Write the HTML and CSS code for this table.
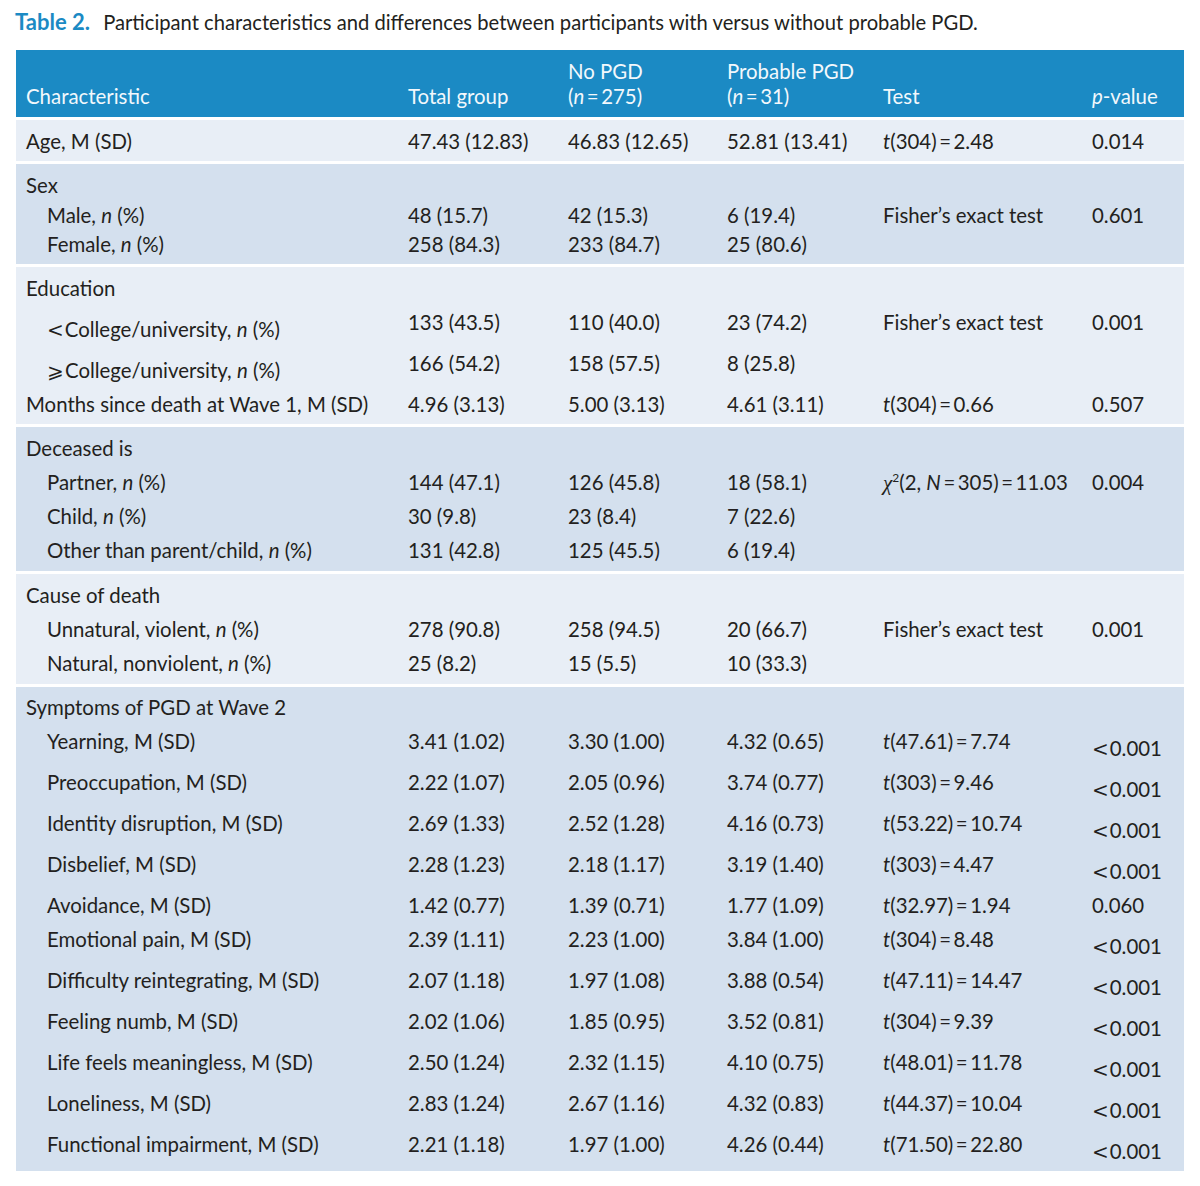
FILE: index.html
```html
<!DOCTYPE html>
<html lang="en">
<head>
<meta charset="utf-8">
<title>Table 2</title>
<link rel="stylesheet" href="styles.css">
</head>
<body>
<div class="page">
  <p class="caption"><span class="label">Table 2.</span> Participant characteristics and differences between participants with versus without probable PGD.</p>

  <div class="table">
    <div class="head row">
      <div>Characteristic</div>
      <div>Total group</div>
      <div>No PGD<br>(<i>n</i>&#8201;=&#8201;275)</div>
      <div>Probable PGD<br>(<i>n</i>&#8201;=&#8201;31)</div>
      <div>Test</div>
      <div><i>p</i>-value</div>
    </div>

    <div class="band light">
      <div class="row">
        <div>Age, M (SD)</div><div>47.43 (12.83)</div><div>46.83 (12.65)</div><div>52.81 (13.41)</div><div><i>t</i>(304)&#8201;=&#8201;2.48</div><div>0.014</div>
      </div>
    </div>

    <div class="band dark">
      <div class="row tight-head"><div>Sex</div></div>
      <div class="row tight">
        <div class="sub">Male, <i>n</i> (%)</div><div>48 (15.7)</div><div>42 (15.3)</div><div>6 (19.4)</div><div>Fisher’s exact test</div><div>0.601</div>
      </div>
      <div class="row">
        <div class="sub">Female, <i>n</i> (%)</div><div>258 (84.3)</div><div>233 (84.7)</div><div>25 (80.6)</div><div></div><div></div>
      </div>
    </div>

    <div class="band light">
      <div class="row"><div>Education</div></div>
      <div class="row">
        <div class="sub low"><span class="op">&lt;</span>College/university, <i>n</i> (%)</div><div>133 (43.5)</div><div>110 (40.0)</div><div>23 (74.2)</div><div>Fisher’s exact test</div><div>0.001</div>
      </div>
      <div class="row">
        <div class="sub low"><span class="op">⩾</span>College/university, <i>n</i> (%)</div><div>166 (54.2)</div><div>158 (57.5)</div><div>8 (25.8)</div><div></div><div></div>
      </div>
      <div class="row">
        <div>Months since death at Wave 1, M (SD)</div><div>4.96 (3.13)</div><div>5.00 (3.13)</div><div>4.61 (3.11)</div><div><i>t</i>(304)&#8201;=&#8201;0.66</div><div>0.507</div>
      </div>
    </div>

    <div class="band dark deceased">
      <div class="row"><div>Deceased is</div></div>
      <div class="row">
        <div class="sub">Partner, <i>n</i> (%)</div><div>144 (47.1)</div><div>126 (45.8)</div><div>18 (58.1)</div><div><span class="chi">χ</span><sup>2</sup>(2, <i>N</i>&#8201;=&#8201;305)&#8201;=&#8201;11.03</div><div>0.004</div>
      </div>
      <div class="row">
        <div class="sub">Child, <i>n</i> (%)</div><div>30 (9.8)</div><div>23 (8.4)</div><div>7 (22.6)</div><div></div><div></div>
      </div>
      <div class="row">
        <div class="sub">Other than parent/child, <i>n</i> (%)</div><div>131 (42.8)</div><div>125 (45.5)</div><div>6 (19.4)</div><div></div><div></div>
      </div>
    </div>

    <div class="band light cause">
      <div class="row"><div>Cause of death</div></div>
      <div class="row">
        <div class="sub">Unnatural, violent, <i>n</i> (%)</div><div>278 (90.8)</div><div>258 (94.5)</div><div>20 (66.7)</div><div>Fisher’s exact test</div><div>0.001</div>
      </div>
      <div class="row">
        <div class="sub">Natural, nonviolent, <i>n</i> (%)</div><div>25 (8.2)</div><div>15 (5.5)</div><div>10 (33.3)</div><div></div><div></div>
      </div>
    </div>

    <div class="band dark last">
      <div class="row"><div>Symptoms of PGD at Wave 2</div></div>
      <div class="row">
        <div class="sub">Yearning, M (SD)</div><div>3.41 (1.02)</div><div>3.30 (1.00)</div><div>4.32 (0.65)</div><div><i>t</i>(47.61)&#8201;=&#8201;7.74</div><div class="low"><span class="op">&lt;</span>0.001</div>
      </div>
      <div class="row">
        <div class="sub">Preoccupation, M (SD)</div><div>2.22 (1.07)</div><div>2.05 (0.96)</div><div>3.74 (0.77)</div><div><i>t</i>(303)&#8201;=&#8201;9.46</div><div class="low"><span class="op">&lt;</span>0.001</div>
      </div>
      <div class="row">
        <div class="sub">Identity disruption, M (SD)</div><div>2.69 (1.33)</div><div>2.52 (1.28)</div><div>4.16 (0.73)</div><div><i>t</i>(53.22)&#8201;=&#8201;10.74</div><div class="low"><span class="op">&lt;</span>0.001</div>
      </div>
      <div class="row">
        <div class="sub">Disbelief, M (SD)</div><div>2.28 (1.23)</div><div>2.18 (1.17)</div><div>3.19 (1.40)</div><div><i>t</i>(303)&#8201;=&#8201;4.47</div><div class="low"><span class="op">&lt;</span>0.001</div>
      </div>
      <div class="row">
        <div class="sub">Avoidance, M (SD)</div><div>1.42 (0.77)</div><div>1.39 (0.71)</div><div>1.77 (1.09)</div><div><i>t</i>(32.97)&#8201;=&#8201;1.94</div><div>0.060</div>
      </div>
      <div class="row">
        <div class="sub">Emotional pain, M (SD)</div><div>2.39 (1.11)</div><div>2.23 (1.00)</div><div>3.84 (1.00)</div><div><i>t</i>(304)&#8201;=&#8201;8.48</div><div class="low"><span class="op">&lt;</span>0.001</div>
      </div>
      <div class="row">
        <div class="sub">Difficulty reintegrating, M (SD)</div><div>2.07 (1.18)</div><div>1.97 (1.08)</div><div>3.88 (0.54)</div><div><i>t</i>(47.11)&#8201;=&#8201;14.47</div><div class="low"><span class="op">&lt;</span>0.001</div>
      </div>
      <div class="row">
        <div class="sub">Feeling numb, M (SD)</div><div>2.02 (1.06)</div><div>1.85 (0.95)</div><div>3.52 (0.81)</div><div><i>t</i>(304)&#8201;=&#8201;9.39</div><div class="low"><span class="op">&lt;</span>0.001</div>
      </div>
      <div class="row">
        <div class="sub">Life feels meaningless, M (SD)</div><div>2.50 (1.24)</div><div>2.32 (1.15)</div><div>4.10 (0.75)</div><div><i>t</i>(48.01)&#8201;=&#8201;11.78</div><div class="low"><span class="op">&lt;</span>0.001</div>
      </div>
      <div class="row">
        <div class="sub">Loneliness, M (SD)</div><div>2.83 (1.24)</div><div>2.67 (1.16)</div><div>4.32 (0.83)</div><div><i>t</i>(44.37)&#8201;=&#8201;10.04</div><div class="low"><span class="op">&lt;</span>0.001</div>
      </div>
      <div class="row">
        <div class="sub">Functional impairment, M (SD)</div><div>2.21 (1.18)</div><div>1.97 (1.00)</div><div>4.26 (0.44)</div><div><i>t</i>(71.50)&#8201;=&#8201;22.80</div><div class="low"><span class="op">&lt;</span>0.001</div>
      </div>
    </div>
  </div>
</div>
</body>
</html>
```

FILE: styles.css
```css
html, body {
  margin: 0;
  padding: 0;
  background: #ffffff;
}

body {
  font-family: "Lato", "Open Sans", "DejaVu Sans", sans-serif;
  font-size: 20.4px;
  color: #231f20;
}

.page {
  padding: 7px 16px 0 16px;
}

.caption {
  margin: 0 0 13px 0;
  line-height: 30px;
  font-size: 20.2px;
  color: #231f20;
  white-space: nowrap;
}

.caption .label {
  color: #1b8ac4;
  font-weight: 700;
  font-size: 22px;
  margin-left: -1px;
  margin-right: 8px;
}

.table {
  width: 1168px;
}

.row {
  display: grid;
  grid-template-columns: 382px 160px 159px 156px 209px 92px;
  align-items: start;
  line-height: 34px;
  white-space: nowrap;
}

.row > div {
  height: 34px;
}

.head {
  background: #1b8ac4;
  color: #f2f8fc;
  height: 67px;
  box-sizing: border-box;
  padding: 9px 0 8px 10px;
  align-items: end;
  line-height: 25px;
  margin-bottom: 3px;
}

.head > div {
  height: auto;
}

.band {
  padding: 4px 0 3px 10px;
  margin-bottom: 3px;
}

.band.light {
  background: #e8eef6;
}

.band.dark {
  background: #d4e0ee;
}

.band.deceased,
.band.cause {
  padding-bottom: 4px;
}

.band.last {
  padding-top: 3px;
  margin-bottom: 0;
}

.row.tight-head > div {
  height: 30px;
}

.row.tight > div {
  height: 29px;
}

.sub {
  padding-left: 21px;
}

.row > .low {
  padding-top: 7px;
}

.op {
  font-family: "DejaVu Serif", "Liberation Serif", serif;
  font-size: 20px;
  line-height: 0;
  margin-right: 1px;
}

.chi {
  font-family: "Liberation Serif", serif;
  font-style: italic;
  font-size: 21px;
  line-height: 0;
}

sup {
  font-size: 12px;
  line-height: 0;
  vertical-align: 8px;
}

i {
  font-style: italic;
}
```
